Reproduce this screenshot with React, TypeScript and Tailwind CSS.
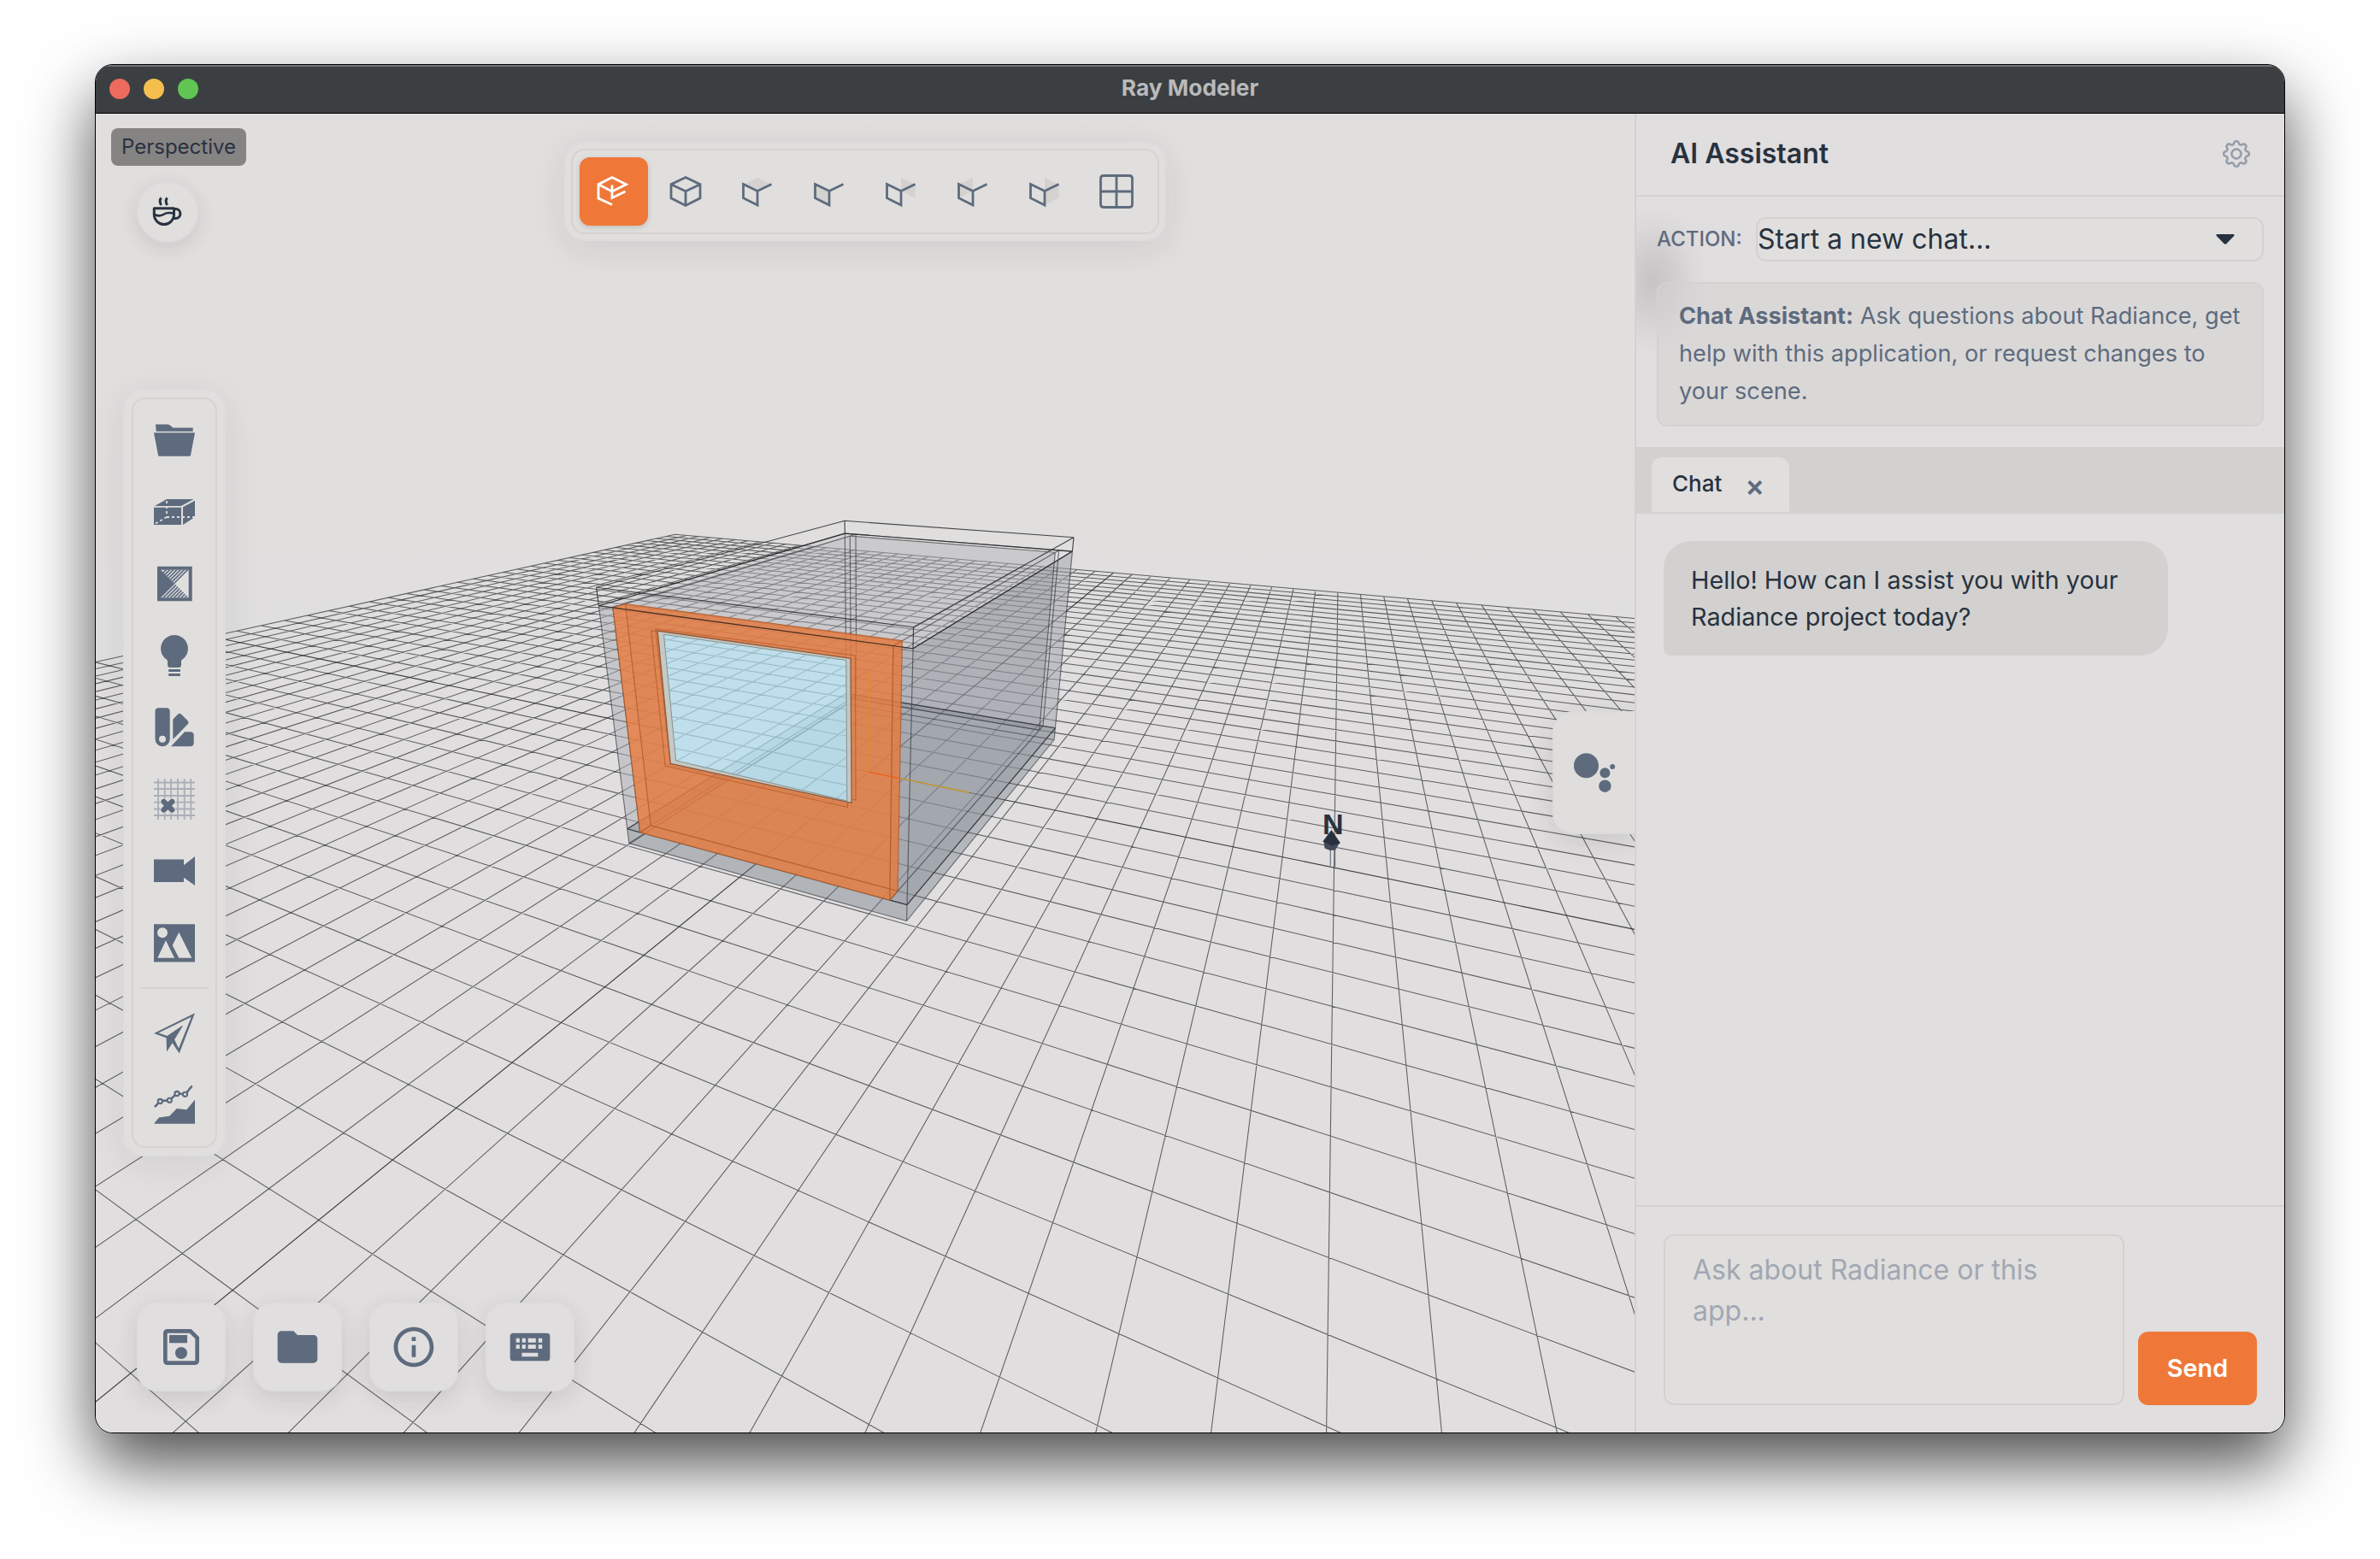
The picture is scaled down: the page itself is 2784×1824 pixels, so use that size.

import React from "react";
import { BsGear } from "react-icons/bs";
import { MdFolder, MdInfoOutline, MdOutlineSave } from "react-icons/md";

type Vec3 = [number, number, number];
type Vec2 = [number, number];

/* ---------- scene camera ---------- */

const CAMERA = { x: 9.2511, y: 9.2637, z: 18.5369, yaw: 0.4677, pitch: 0.4213, focal: 1004.8 };
const CENTER: Vec2 = [1012, 904];
const NEAR = 0.2;

function toView([x, y, z]: Vec3): Vec3 {
  const dx = x - CAMERA.x;
  const dy = y - CAMERA.y;
  const dz = z - CAMERA.z;
  const sa = Math.sin(CAMERA.yaw);
  const ca = Math.cos(CAMERA.yaw);
  const st = Math.sin(CAMERA.pitch);
  const ct = Math.cos(CAMERA.pitch);
  const h = -dx * sa - dz * ca;
  return [dx * ca - dz * sa, h * st + dy * ct, h * ct - dy * st];
}

function toScreen([x, y, z]: Vec3): Vec2 {
  return [CENTER[0] + (CAMERA.focal * x) / z, CENTER[1] - (CAMERA.focal * y) / z];
}

const project = (p: Vec3) => toScreen(toView(p));

function segment(a: Vec3, b: Vec3): string {
  let p = toView(a);
  let q = toView(b);
  if (p[2] < NEAR && q[2] < NEAR) return "";
  const cut = (i: Vec3, o: Vec3): Vec3 => {
    const t = (NEAR - i[2]) / (o[2] - i[2]);
    return [i[0] + (o[0] - i[0]) * t, i[1] + (o[1] - i[1]) * t, NEAR];
  };
  if (p[2] < NEAR) p = cut(q, p);
  if (q[2] < NEAR) q = cut(p, q);
  const [x1, y1] = toScreen(p);
  const [x2, y2] = toScreen(q);
  return `M${x1.toFixed(1)} ${y1.toFixed(1)}L${x2.toFixed(1)} ${y2.toFixed(1)}`;
}

const polygon = (pts: Vec3[]) => "M" + pts.map((p) => project(p).map((n) => n.toFixed(1)).join(" ")).join("L") + "Z";

function boxEdges(a: Vec3, b: Vec3): string {
  const c: Vec3[] = [];
  for (let i = 0; i < 8; i++) c.push([i & 1 ? b[0] : a[0], i & 2 ? b[1] : a[1], i & 4 ? b[2] : a[2]]);
  let d = "";
  for (let i = 0; i < 8; i++) for (const bit of [1, 2, 4]) if (!(i & bit)) d += segment(c[i], c[i | bit]);
  return d;
}

/* ---------- ground grid ---------- */

const HALF = 30;
let gridPath = "";
for (let i = -HALF; i <= HALF; i++) {
  if (i === 0) continue;
  gridPath += segment([i, 0, -HALF], [i, 0, HALF]) + segment([-HALF, 0, i], [HALF, 0, i]);
}
const axisLines = segment([0, 0, -HALF], [0, 0, HALF]) + segment([-HALF, 0, 0], [HALF, 0, 0]);

/* ---------- room ---------- */

const W = 3.1505;
const L = 5.0027;
const H = 5.1778;
const T = 0.3756;
const WO = W + T;
const LO = L + T;

const floorEdges = boxEdges([-WO, -T, -LO], [WO, 0, LO]);
const ceilingEdges = boxEdges([-WO, H, -LO], [WO, H + T, LO]);
const wallEdges =
  boxEdges([-WO, 0, -LO], [-W, H, LO]) + boxEdges([W, 0, -LO], [WO, H, LO]) + boxEdges([-W, 0, -LO], [W, H, -L]);
const frontWallEdges = boxEdges([-W, 0, L], [W, H, LO]);

const roomHull = polygon([
  [-WO, 0, LO], [WO, 0, LO], [WO, 0, -LO], [WO, H, -LO], [-WO, H, -LO], [-WO, H, LO],
]);
const floorHull = polygon([
  [-WO, -T, LO], [WO, -T, LO], [WO, -T, -LO], [WO, 0, -LO], [-WO, 0, -LO], [-WO, 0, LO],
]);
const floorFront = polygon([[-WO, -T, LO], [WO, -T, LO], [WO, 0, LO], [-WO, 0, LO]]);
const floorSide = polygon([[WO, -T, LO], [WO, -T, -LO], [WO, 0, -LO], [WO, 0, LO]]);
const leftInner = polygon([[-W, 0, L], [-W, H, L], [-W, H, -L], [-W, 0, -L]]);
const leftFront = polygon([[-WO, 0, LO], [-W, 0, LO], [-W, H, LO], [-WO, H, LO]]);
const leftTop = polygon([[-WO, H, LO], [-W, H, LO], [-W, H, -LO], [-WO, H, -LO]]);
const backInner = polygon([[-W, 0, -L], [W, 0, -L], [W, H, -L], [-W, H, -L]]);
const rightOuter = polygon([[WO, 0, LO], [WO, 0, -LO], [WO, H, -LO], [WO, H, LO]]);
const rightFront = polygon([[W, 0, LO], [WO, 0, LO], [WO, H, LO], [W, H, LO]]);
const frontHull = polygon([[-W, 0, LO], [W, 0, LO], [W, 0, L], [W, H, L], [-W, H, L], [-W, H, LO]]);

const shape = (pts: Vec2[]) => "M" + pts.map((p) => p.join(" ")).join("L") + "Z";
const frameOuter = shape([[769.2, 738], [995, 770.3], [996.2, 939.5], [784.3, 893.5]]);
const glass = shape([[776.5, 742.3], [989.8, 772.5], [990.8, 937], [790.6, 889.8]]);
const revealA = shape([[761.6, 738], [994.5, 771.5], [991.5, 944.5], [778.2, 896]]);
const revealB = shape([[767, 735.5], [1000.5, 767], [1001, 936], [784, 891]]);

const WALL = "#6b7280";

function Scene() {
  const x = project([2.8, 0, 0]);
  const o = project([0, 0, 0]);
  const y = project([0, 2.75, 0]);
  return (
    <svg className="block h-[1543px] w-[1800px]" viewBox="112 133 1800 1543" fill="none">
      <path d={gridPath} stroke="#3c3c3e" strokeOpacity="0.8" strokeWidth="1.05" />
      <path d={axisLines} stroke="#2c2c2e" strokeOpacity="0.9" strokeWidth="1.15" />

      <path d={roomHull} fill="#e0dfdf" fillOpacity="0.35" />
      <path d={floorHull} fill={WALL} fillOpacity="0.33" />
      <path d={floorFront} fill={WALL} fillOpacity="0.1" />
      <path d={floorSide} fill={WALL} fillOpacity="0.06" />
      <path d={leftInner} fill={WALL} fillOpacity="0.19" />
      <path d={leftTop} fill={WALL} fillOpacity="0.1" />
      <path d={leftFront} fill={WALL} fillOpacity="0.22" />
      <path d={backInner} fill={WALL} fillOpacity="0.19" />
      <path d={rightOuter} fill={WALL} fillOpacity="0.28" />
      <path d={rightFront} fill={WALL} fillOpacity="0.24" />
      <path d={wallEdges} stroke="#2a2c30" strokeOpacity="0.62" strokeWidth="1.15" />
      <path d={floorEdges} stroke="#2a2c30" strokeOpacity="0.6" strokeWidth="1.15" />

      <path d={`M${o[0]} ${o[1]}L${x[0]} ${x[1]}`} stroke="#c89a2c" strokeWidth="1.4" />

      <path d={frontHull + frameOuter} fill="#e27c42" fillOpacity="0.86" fillRule="evenodd" />
      <path d={frontWallEdges} stroke="#a85423" strokeOpacity="0.7" strokeWidth="1.2" />
      <path d={revealA + revealB} stroke="#b85722" strokeOpacity="0.7" strokeWidth="1.2" />
      <path d={frameOuter} fill="#c5c9c4" fillOpacity="0.95" stroke="#8f5a3c" strokeWidth="1.3" />
      <path d={glass} fill="#bedfeb" stroke="#7c8a88" strokeWidth="0.9" />
      <clipPath id="pane">
        <path d={glass} />
      </clipPath>
      <g clipPath="url(#pane)">
        <path d={floorHull} fill="#7b9dad" fillOpacity="0.1" />
        <path d={gridPath + axisLines} stroke="#8fb0bb" strokeOpacity="0.75" strokeWidth="1.1" />
        <path d={floorEdges + wallEdges} stroke="#86a6b1" strokeOpacity="0.7" strokeWidth="1.1" />
      </g>
      <path d={`M${o[0]} ${o[1]}L${y[0]} ${y[1]}`} stroke="#d98f25" strokeWidth="1.3" />
      <path d={`M${o[0]} ${o[1]}L${o[0] + 34} ${o[1] + 7}`} stroke="#f0602a" strokeWidth="1.5" />
      <path d={ceilingEdges} stroke="#1f2124" strokeOpacity="0.8" strokeWidth="1.15" />

      {/* north arrow */}
      <path d="M1556.3 990V1013M1561.6 990V1014" stroke="#6a7280" strokeWidth="1.2" />
      <path d="M1548.5 985L1549.5 992.5L1556 995L1562 994.5L1566.5 987Z" fill="#434b58" />
      <path d="M1557.5 971L1568 986.5L1558 989.5L1547.3 984.5Z" fill="#28323f" />
      <text x="1547" y="976" fontSize="34" fontWeight="700" fill="#28323f" fontFamily="Liberation Sans, sans-serif">
        N
      </text>
    </svg>
  );
}

/* ---------- icons ---------- */

function CoffeeIcon() {
  return (
    <svg className="h-12 w-12" viewBox="0 0 48 48" fill="none" stroke="#28323f" strokeWidth="3" strokeLinejoin="round">
      <path d="M8.3 19.7H31.5V27.5A11.8 11.8 0 0 1 19.9 38.6 11.8 11.8 0 0 1 8.3 27.5Z" />
      <path d="M31.5 20.6H33.5A5.2 5.2 0 0 1 33.5 31.4H30.8" />
      <path d="M8.8 27C13 29 17.5 28.3 20 26.5 23 24.5 27 24.8 31 25.5" strokeWidth="2.6" />
      <path d="M16.6 7.5C14.5 10 14.5 12.5 16.6 16M23.6 7.5C21.5 10 21.5 12.5 23.6 16" strokeLinejoin="miter" />
    </svg>
  );
}

type CubeKind = "perspective" | "axonometric" | "top" | "front" | "back" | "left" | "right" | "quad";

const shadedFace: Partial<Record<CubeKind, string>> = {
  top: "M7 15.7L24 7.7L40.5 15.7L24 23.5Z",
  front: "M7 15.7L24 23.5V40L7 31.5Z",
  back: "M24 7.7L40.5 15.7V31.5L24 23.5Z",
  left: "M24 7.7V23.5L9 31L7 15.7Z",
  right: "M24 7.7L40.5 15.7V31.5L24 40Z",
};

function CubeIcon({ kind }: { kind: CubeKind }) {
  return (
    <svg className="h-12 w-12" viewBox="0 0 48 48" fill="none" stroke="currentColor" strokeWidth="2.8">
      {shadedFace[kind] && <path d={shadedFace[kind]} fill="#d3d2d0" stroke="none" />}
      {kind === "perspective" && (
        <path d="M22 39.5L6 32V15.7L22 7.5L38.5 15.7L22 24L6 15.7M22 16.5V31.5L37.5 24" />
      )}
      {kind === "axonometric" && (
        <path d="M24 7.5L41 15.7V31.8L24 40.5L7 31.8V15.7ZM7 15.7L24 23.8L41 15.7M24 23.8V40.5" />
      )}
      {kind === "quad" && (
        <path d="M9 5.5H39Q42.5 5.5 42.5 9V39Q42.5 42.5 39 42.5H9Q5.5 42.5 5.5 39V9Q5.5 5.5 9 5.5ZM24 5.5V42.5M5.5 24H42.5" />
      )}
      {shadedFace[kind] && <path d="M40.5 15.5L24 23.5L7.5 15.5V31.7L24 40V23.5" />}
    </svg>
  );
}

const hatch = Array.from({ length: 22 }, (_, i) => -22 + i * 4.2)
  .map((k) => `M${k} 44L${k + 40} 4`)
  .join("");

const sideIcons: Record<string, React.ReactNode> = {
  project: (
    <g>
      <path d="M2 5.5H16Q18 5.5 22.5 9.5H45.7V13.7H2.7Z" />
      <path d="M0 15.3H48L43 41.5Q42.7 42.7 41.5 42.7H6.5Q5.3 42.7 5 41.5Z" />
    </g>
  ),
  geometry: (
    <g>
      <path d="M0 18.7H32V39H0ZM15 9H46.7L32 17H1ZM34 18.3L48 10.7V30L34 39Z" />
      <path d="M15 11V30M15 30H48M15 30L1 38" stroke="#e0dfdd" strokeWidth="1.8" strokeDasharray="3 3" fill="none" />
    </g>
  ),
  materials: (
    <g>
      <clipPath id="hatch-clip">
        <path d="M8 7.7H40.7L24.3 24ZM24.3 24L40.7 40.3H8Z" />
      </clipPath>
      <path d="M4 3.7H44.7V44.3H4ZM8 7.7V40.3H40.7V7.7Z" fillRule="evenodd" />
      <path d="M8 7.7L24.3 24L8 40.3Z" />
      <g clipPath="url(#hatch-clip)">
        <path d={hatch} stroke="currentColor" strokeWidth="1.7" />
      </g>
    </g>
  ),
  lighting: (
    <g>
      <path d="M24 0A16 16 0 0 1 32 29.8V35Q32 38 29 38H19Q16 38 16 35V29.8A16 16 0 0 1 24 0Z" />
      <rect x="17" y="40" width="14" height="3" rx="1" />
      <rect x="17" y="45" width="14" height="3" rx="1" />
    </g>
  ),
  palette: (
    <g>
      <path
        fillRule="evenodd"
        d="M5.5 1.3H14.7Q18.7 1.3 18.7 5.3V37.7A8.6 8.6 0 0 1 1.5 37.7V5.3Q1.5 1.3 5.5 1.3ZM10 33.7A4 4 0 1 0 10 41.7 4 4 0 1 0 10 33.7Z"
      />
      <path d="M22.3 38V15.5Q22.3 14.5 23.3 13.5L27.8 8.9Q30 6.8 32.3 8.9L39.4 15.9Q41.4 18.2 39.4 20.5Z" />
      <path d="M36 29.3H42.5Q46.7 29.3 46.7 33.5V42Q46.7 46.3 42.5 46.3H20Z" />
    </g>
  ),
  sensor: (
    <g fill="none">
      <path
        d="M5 0V48M12.7 0V48M20 0V48M28 0V48M35.7 0V48M43.3 0V48M0 4.5H48M0 12H48M0 20H48M0 27.7H48M0 35.5H48M0 43H48"
        stroke="#a9aeb8"
        strokeWidth="1.8"
      />
      <path d="M11.5 26.8L21.3 36.6M21.3 26.8L11.5 36.6" stroke="#e0dfdd" strokeWidth="8.4" strokeLinecap="round" />
      <path d="M11.6 26.9L21.2 36.5M21.2 26.9L11.6 36.5" stroke="currentColor" strokeWidth="6.4" strokeLinecap="round" />
    </g>
  ),
  camera: <path d="M0 10.5H35V17.3L48 7V41L35 31.7V37H0Z" />,
  render: (
    <path
      fillRule="evenodd"
      d="M0 2.3H48V46.5H0ZM10 6.3A6 6 0 1 0 10 18.3 6 6 0 1 0 10 6.3ZM14 21.3L4.3 41.7H24ZM29.3 11.7L21.7 27L29.3 41.7H44.3Z"
    />
  ),
  send: (
    <g>
      <path fillRule="evenodd" d="M48 0.3L29.7 47.5L21.5 35L15 45.5V29.5L0 24ZM43.8 4.8L5.5 23.5L15.5 27L34 14.5L24 31L29 41.5Z" />
      <path d="M34 15L14.5 28.5L15 45L22.7 33.5Z" />
    </g>
  ),
  results: (
    <g>
      <path d="M0 45.7L6 38.5L18.3 36.7L26.7 28L38.3 29.3L48 17.7V45.7Z" />
      <path
        d="M1.7 25.3L7.3 19.3L18.3 18.3L27 10.3L36.7 11.3L44 2.3"
        fill="none"
        stroke="currentColor"
        strokeWidth="2.6"
        strokeLinecap="round"
      />
      <g fill="#e0dfdd" stroke="currentColor" strokeWidth="2.1">
        <circle cx="7.3" cy="19.5" r="2.6" />
        <circle cx="18.3" cy="18.3" r="2.6" />
        <circle cx="27" cy="10.5" r="2.6" />
        <circle cx="36.5" cy="11.3" r="2.6" />
      </g>
    </g>
  ),
};

function SideButton({ name }: { name: string }) {
  return (
    <button className="flex h-20 w-20 items-center justify-center text-[#5e6b7e]">
      <svg className="h-12 w-12" viewBox="0 0 48 48" fill="currentColor">
        {sideIcons[name]}
      </svg>
    </button>
  );
}

function KeyboardIcon() {
  return (
    <svg className="h-14 w-14" viewBox="0 0 24 24" fill="currentColor">
      <path
        fillRule="evenodd"
        d="M3.5 5H20.5Q22 5 22 6.5V17.5Q22 19 20.5 19H3.5Q2 19 2 17.5V6.5Q2 5 3.5 5ZM5 7.6V9.7H6.8V7.6ZM8 7.6V9.7H9.8V7.6ZM11 7.6V9.7H14.9V7.6ZM16.2 7.6V9.7H18.1V7.6ZM5 10.8V12.9H6.8V10.8ZM8 10.8V12.9H9.8V10.8ZM11 10.8V12.9H14.9V10.8ZM16.2 10.8V12.9H18.1V10.8ZM7.9 14.9V16.8H16V14.9Z"
      />
    </svg>
  );
}

/* ---------- floating controls ---------- */

const views: CubeKind[] = ["perspective", "axonometric", "top", "front", "back", "left", "right", "quad"];

function ViewToolbar() {
  return (
    <div className="absolute left-[548px] top-[33px] rounded-3xl border-2 border-[#dddcdf] bg-[#e0dfdd] p-1.5 shadow-[0_8px_40px_rgba(40,36,40,0.09)]">
      <div className="flex gap-1 rounded-2xl border-2 border-[#d4d3d1] p-2">
        {views.map((v) => (
          <button
            key={v}
            className={
              v === "perspective"
                ? "flex h-20 w-20 items-center justify-center rounded-xl bg-[#ef7839] text-white shadow-[0_2px_6px_rgba(0,0,0,0.15)]"
                : "flex h-20 w-20 items-center justify-center rounded-xl text-[#5e6b7e]"
            }
          >
            <CubeIcon kind={v} />
          </button>
        ))}
      </div>
    </div>
  );
}

function SideToolbar() {
  return (
    <div className="absolute left-[32px] top-[322px] rounded-3xl border-2 border-[#dddcdf] bg-[#e0dfdd] p-2 shadow-[0_8px_40px_rgba(40,36,40,0.08)]">
      <div className="flex flex-col gap-1 rounded-2xl border-2 border-[#d4d3d1] p-2">
        {["project", "geometry", "materials", "lighting", "palette", "sensor", "camera", "render"].map((n) => (
          <SideButton key={n} name={n} />
        ))}
        <div className="my-2 h-0.5 w-20 bg-[#d4d3d1]" />
        <SideButton name="send" />
        <SideButton name="results" />
      </div>
    </div>
  );
}

function BottomBar() {
  const items = [
    <MdOutlineSave key="s" size={56} />,
    <MdFolder key="f" size={56} />,
    <MdInfoOutline key="i" size={56} />,
    <KeyboardIcon key="k" />,
  ];
  return (
    <div className="absolute bottom-12 left-12 flex gap-8">
      {items.map((icon, i) => (
        <button
          key={i}
          className="flex h-[104px] w-[104px] items-center justify-center rounded-3xl border-2 border-[#dddddf] bg-[#e0dedf] text-[#5e6b7e] shadow-[0_8px_28px_rgba(40,36,40,0.12)]"
        >
          {icon}
        </button>
      ))}
    </div>
  );
}

function Viewport() {
  return (
    <section className="relative h-full w-[1800px] shrink-0 overflow-hidden bg-linear-to-b from-[#e0dfdd] from-25% to-[#e0dedf] to-45%">
      <Scene />
      <div className="absolute left-[18px] top-[17px] flex h-11 w-[158px] items-center justify-center rounded-lg bg-[#868383] text-2xl text-[#28323f]">
        Perspective
      </div>
      <button className="absolute left-12 top-[79px] flex h-[72px] w-[72px] items-center justify-center rounded-full border-2 border-[#dddbde] bg-[#e0dfdd] shadow-[0_6px_22px_rgba(40,36,40,0.12)]">
        <CoffeeIcon />
      </button>
      <ViewToolbar />
      <SideToolbar />
      <BottomBar />
      <button className="absolute left-[1704px] top-[699px] h-36 w-[98px] rounded-l-3xl border-2 border-r-0 border-[#dcdbdc] bg-[#dfdedd] shadow-[0_8px_32px_rgba(40,36,40,0.13)]">
        <svg className="h-full w-full" viewBox="1818 834 96 140" fill="#5e6b7e">
          <circle cx="1855.5" cy="895.7" r="14.5" />
          <circle cx="1877.4" cy="904.3" r="6" />
          <circle cx="1886.2" cy="897" r="3" />
          <circle cx="1877.4" cy="919.7" r="7.2" />
        </svg>
      </button>
    </section>
  );
}

/* ---------- assistant ---------- */

function Assistant() {
  return (
    <aside className="relative flex w-[760px] flex-col border-l-2 border-[#d3d2d0] bg-[#e0dedf] text-[#28323f]">
      <div className="absolute left-0 top-[115px] h-[170px] w-[84px] bg-[radial-gradient(ellipse_at_20px_80px,rgba(90,84,90,0.19)_0,rgba(90,84,90,0.13)_22px,rgba(90,84,90,0.04)_46px,transparent_64px)]" />
      <header className="flex h-[97px] items-center justify-between border-b-2 border-[#d3d2d0] pb-0.5 pl-10 pr-10">
        <h2 className="text-[32px] font-semibold leading-none">AI Assistant</h2>
        <BsGear size={32} color="#949ba8" stroke="#949ba8" strokeWidth={0.3} />
      </header>
      <div className="relative flex flex-col gap-6 p-6">
        <div className="flex items-center justify-between">
          <span className="text-2xl font-medium text-[#5e6b7e]">ACTION:</span>
          <div className="flex h-[52px] w-[594px] items-center justify-between rounded-xl border-2 border-[#d3d2d0] bg-[#e0dfdd] pr-8">
            <span className="text-[32px] leading-none">Start a new chat...</span>
            <svg className="h-3 w-[22px]" viewBox="0 0 22 12" fill="#28323f">
              <path d="M1.5 0H20.5Q22.5 0.5 21 2.2L12.5 11Q11 12.5 9.5 11L1 2.2Q-0.5 0.5 1.5 0Z" />
            </svg>
          </div>
        </div>
        <p className="whitespace-nowrap rounded-xl border-2 border-[#d3d2d0] bg-[#d3d2d0]/50 px-6 py-4 text-[27.2px] leading-[44.2px] text-[#5e6b7e]">
          <strong className="font-bold">Chat Assistant:</strong> Ask questions about Radiance, get
          <br />
          help with this application, or request changes to
          <br />
          your scene.
        </p>
      </div>
      <div className="flex h-[78px] items-start border-b-2 border-[#d3d2d0] bg-[#d2d1cf] pl-[18px] pt-3">
        <div className="flex h-16 w-[161px] items-center rounded-t-xl bg-[#e0dfdd] pb-0.5 pl-6">
          <span className="text-[26px] font-medium">Chat</span>
          <span className="ml-[27px] mt-1 text-[34px] font-semibold leading-none text-[#5e6b7e]">×</span>
        </div>
      </div>
      <div className="flex-1 p-8">
        <div className="h-[134px] w-[590px] rounded-[32px] rounded-bl-lg bg-[#d2d1cf] px-8 py-6 text-[28.8px] leading-[43.2px]">
          Hello! How can I assist you with your Radiance project today?
        </div>
      </div>
      <footer className="flex h-[266px] items-end gap-4 border-t-2 border-[#d3d2d0] p-8">
        <div className="h-[200px] w-[539px] rounded-xl border-2 border-[#d3d2d0] bg-[#e0dfdd] px-8 py-4 text-[32px] leading-[48px] text-[#a1a7b3]">
          Ask about Radiance or this
          <br />
          app...
        </div>
        <button className="flex h-[86px] w-[139px] items-center justify-center rounded-xl bg-[#ef7839] text-[28.8px] font-semibold text-white">
          Send
        </button>
      </footer>
    </aside>
  );
}

export default function App() {
  return (
    <main className="flex h-[1824px] w-[2784px] items-start overflow-hidden bg-white pl-[111px] pt-[75px] font-['Inter',sans-serif]">
      <div className="flex h-[1602px] w-[2562px] flex-col overflow-hidden rounded-[21px] border border-black bg-[#e0dedf] shadow-[0_36px_80px_rgba(0,0,0,0.7)]">
        <div className="flex h-[57px] shrink-0 items-center border-b border-black bg-[#3b3f41] px-4 shadow-[inset_0_2px_0_#6f7476]">
          <div className="flex w-[240px] gap-4">
            <span className="h-6 w-6 rounded-full bg-[#ed6a5e]" />
            <span className="h-6 w-6 rounded-full bg-[#f4bf4f]" />
            <span className="h-6 w-6 rounded-full bg-[#61c554]" />
          </div>
          <div className="flex-1 pb-0.5 pr-[240px] text-center text-[26.3px] font-bold leading-none text-[#b8babb]">
            Ray Modeler
          </div>
        </div>
        <div className="flex min-h-0 flex-1">
          <Viewport />
          <Assistant />
        </div>
      </div>
    </main>
  );
}
